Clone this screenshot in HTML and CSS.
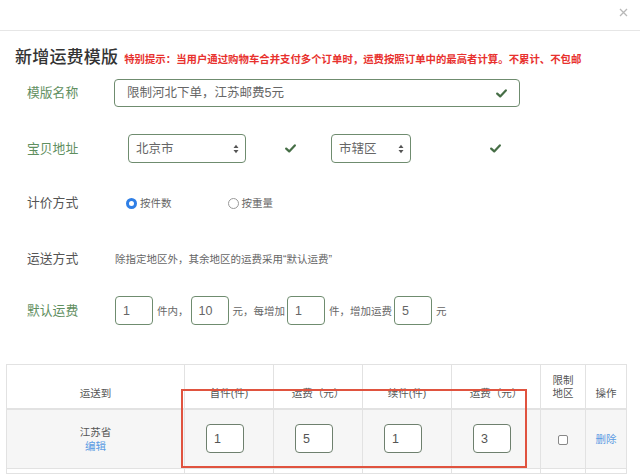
FILE: index.html
```html
<!DOCTYPE html>
<html lang="zh-CN">
<head>
<meta charset="utf-8">
<title>新增运费模版</title>
<link rel="stylesheet" href="styles.css">
</head>
<body>
<div class="modal-header">
  <span class="close"><svg width="9" height="9" viewBox="0 0 9 9"><path d="M1 1L8 8M8 1L1 8" stroke="#b8b8b8" stroke-width="1.3" fill="none"/></svg></span>
</div>
<div class="modal-body">
  <div class="title-row">
    <h3 class="title">新增运费模版</h3>
    <span class="hint">特别提示：当用户通过购物车合并支付多个订单时，运费按照订单中的最高者计算。不累计、不包邮</span>
  </div>

  <div class="form-row row-name">
    <label class="label success">模版名称</label>
    <div class="input input-name">
      <span class="value">限制河北下单，江苏邮费5元</span>
      <svg class="check" width="11" height="9" viewBox="0 0 11 9"><path d="M1.2 4.6L4.2 7.4L9.8 1.4" stroke="#466e46" stroke-width="2.2" fill="none" stroke-linecap="round" stroke-linejoin="round"/></svg>
    </div>
  </div>

  <div class="form-row row-address">
    <label class="label success">宝贝地址</label>
    <div class="select select-city">
      <span class="value">北京市</span>
      <svg class="arrows" width="6" height="10" viewBox="0 0 6 10"><path d="M0.5 4L3 0.8L5.5 4Z M0.5 6L3 9.2L5.5 6Z" fill="#555"/></svg>
    </div>
    <svg class="check check-city" width="11" height="9" viewBox="0 0 11 9"><path d="M1.2 4.6L4.2 7.4L9.8 1.4" stroke="#466e46" stroke-width="2.2" fill="none" stroke-linecap="round" stroke-linejoin="round"/></svg>
    <div class="select select-district">
      <span class="value">市辖区</span>
      <svg class="arrows" width="6" height="10" viewBox="0 0 6 10"><path d="M0.5 4L3 0.8L5.5 4Z M0.5 6L3 9.2L5.5 6Z" fill="#555"/></svg>
    </div>
    <svg class="check check-district" width="11" height="9" viewBox="0 0 11 9"><path d="M1.2 4.6L4.2 7.4L9.8 1.4" stroke="#466e46" stroke-width="2.2" fill="none" stroke-linecap="round" stroke-linejoin="round"/></svg>
  </div>

  <div class="form-row row-pricing">
    <label class="label">计价方式</label>
    <span class="radio checked"></span><span class="small radio-text">按件数</span>
    <span class="radio second"></span><span class="small radio-text">按重量</span>
  </div>

  <div class="form-row row-delivery">
    <label class="label">运送方式</label>
    <span class="small note">除指定地区外，其余地区的运费采用“默认运费”</span>
  </div>

  <div class="form-row row-default">
    <label class="label success">默认运费</label>
    <span class="box first">1</span>
    <span class="small unit">件内，</span>
    <span class="box">10</span>
    <span class="small unit">元，每增加</span>
    <span class="box">1</span>
    <span class="small unit">件，增加运费</span>
    <span class="box">5</span>
    <span class="small unit">元</span>
  </div>

  <div class="table-wrap">
    <table class="fee-table">
      <colgroup>
        <col class="c-dest"><col class="c-num"><col class="c-num"><col class="c-num"><col class="c-num"><col class="c-limit"><col class="c-op">
      </colgroup>
      <thead>
        <tr>
          <th>运送到</th>
          <th>首件(件)</th>
          <th>运费（元）</th>
          <th>续件(件)</th>
          <th>运费（元）</th>
          <th>限制<br>地区</th>
          <th>操作</th>
        </tr>
      </thead>
      <tbody>
        <tr class="row-data">
          <td><div class="dest">江苏省</div><a class="link">编辑</a></td>
          <td><span class="box cell-box">1</span></td>
          <td><span class="box cell-box">5</span></td>
          <td><span class="box cell-box">1</span></td>
          <td><span class="box cell-box">3</span></td>
          <td><span class="checkbox"></span></td>
          <td><a class="link">删除</a></td>
        </tr>
        <tr class="row-next">
          <td></td><td></td><td></td><td></td><td></td><td></td><td></td>
        </tr>
      </tbody>
    </table>
    <div class="highlight"></div>
  </div>
</div>
</body>
</html>
```

FILE: styles.css
```css
* { box-sizing: border-box; }
html, body { margin: 0; padding: 0; background: #fff; }
body {
  width: 640px;
  height: 474px;
  overflow: hidden;
  font-family: "Liberation Sans", "Noto Sans CJK SC", sans-serif;
  color: #555;
}

.modal-header {
  height: 31px;
  border-bottom: 1px solid #e6e6e6;
  display: flex;
  justify-content: flex-end;
  align-items: flex-start;
  padding: 8px 12px 0 0;
}
.close { display: block; width: 9px; height: 9px; line-height: 0; }

.modal-body { padding: 0; }

.title-row {
  display: flex;
  align-items: baseline;
  margin: 15px 0 0 15px;
  height: 24px;
}
.title {
  margin: 0;
  font-size: 17px;
  font-weight: 500;
  color: #333;
  line-height: 24px;
  letter-spacing: 0.2px;
}
.hint {
  margin-left: 6px;
  font-size: 10.4px;
  font-weight: bold;
  color: #e8312e;
  line-height: 24px;
}

.form-row {
  display: flex;
  align-items: center;
  padding-left: 27px;
}
.label {
  width: 87px;
  flex: none;
  font-size: 12.8px;
  line-height: 16px;
  color: #555;
}
.label.success { color: #5f8f5f; }

.small { font-size: 10.5px; line-height: 14px; color: #666; }

.input, .select, .box {
  border: 1px solid #6f8c6f;
  border-radius: 4px;
  background: #fff;
  display: flex;
  align-items: center;
  color: #666;
}
.value { font-size: 12.5px; line-height: 16px; color: #666; }

.row-name { margin-top: 9px; height: 28px; }
.input-name {
  width: 406px;
  height: 28px;
  padding: 0 12px 0 12px;
  justify-content: space-between;
}
.check { display: block; flex: none; }

.row-address { margin-top: 27px; height: 29px; }
.select {
  height: 29px;
  padding: 0 6px 0 7px;
  justify-content: space-between;
}
.select-city { width: 118px; margin-left: 14px; }
.select-district { width: 80px; margin-left: 35px; }
.arrows { display: block; }
.check-city { margin-left: 39px; }
.check-district { margin-left: 79px; }

.row-pricing { margin-top: 30px; height: 20px; }
.radio {
  width: 11px;
  height: 11px;
  border-radius: 50%;
  border: 1px solid #999;
  background: #fff;
  flex: none;
  margin-left: 12px;
}
.radio.checked {
  border: 3px solid #2f7fe6;
  background: #fff;
}
.radio.second { margin-left: 56px; }
.radio-text { margin-left: 3px; }

.row-delivery { margin-top: 36px; height: 20px; }
.note { margin-left: 1px; }

.row-default { margin-top: 27px; height: 29px; }
.box {
  width: 38px;
  height: 29px;
  padding-left: 7px;
  font-size: 12.5px;
  flex: none;
}
.box.first { margin-left: 1px; }
.unit { margin: 0 2px 0 4px; }

.table-wrap {
  position: relative;
  margin: 39px 0 0 6px;
  width: 620px;
}
.fee-table {
  width: 620px;
  border-collapse: collapse;
  table-layout: fixed;
  font-size: 10.5px;
  color: #555;
}
.c-dest { width: 178px; }
.c-num { width: 89px; }
.c-limit { width: 45px; }
.c-op { width: 41px; }
.fee-table th, .fee-table td {
  border: 1px solid #e2e2e2;
  text-align: center;
  padding: 0;
}
.fee-table th {
  height: 44px;
  vertical-align: bottom;
  padding-bottom: 8px;
  font-weight: normal;
  line-height: 13px;
}
.fee-table thead tr { border-bottom: 2px solid #e2e2e2; }
.row-data { background: #f6f6f6; height: 60px; }
.row-data td { vertical-align: middle; line-height: 14px; }
.dest { color: #555; }
.link { color: #5b9be3; cursor: pointer; }
.cell-box {
  display: inline-flex;
  margin-right: 8px;
  vertical-align: middle;
  border-color: #6e806e;
  color: #555;
}
.checkbox {
  display: inline-block;
  width: 10px;
  height: 10px;
  border: 1px solid #888;
  border-radius: 2px;
  background: #fff;
  vertical-align: middle;
}
.row-next { height: 5px; background: #fff; }

.highlight {
  position: absolute;
  left: 175px;
  top: 25px;
  width: 346px;
  height: 79px;
  border: 2px solid #e0533f;
  pointer-events: none;
}
```
